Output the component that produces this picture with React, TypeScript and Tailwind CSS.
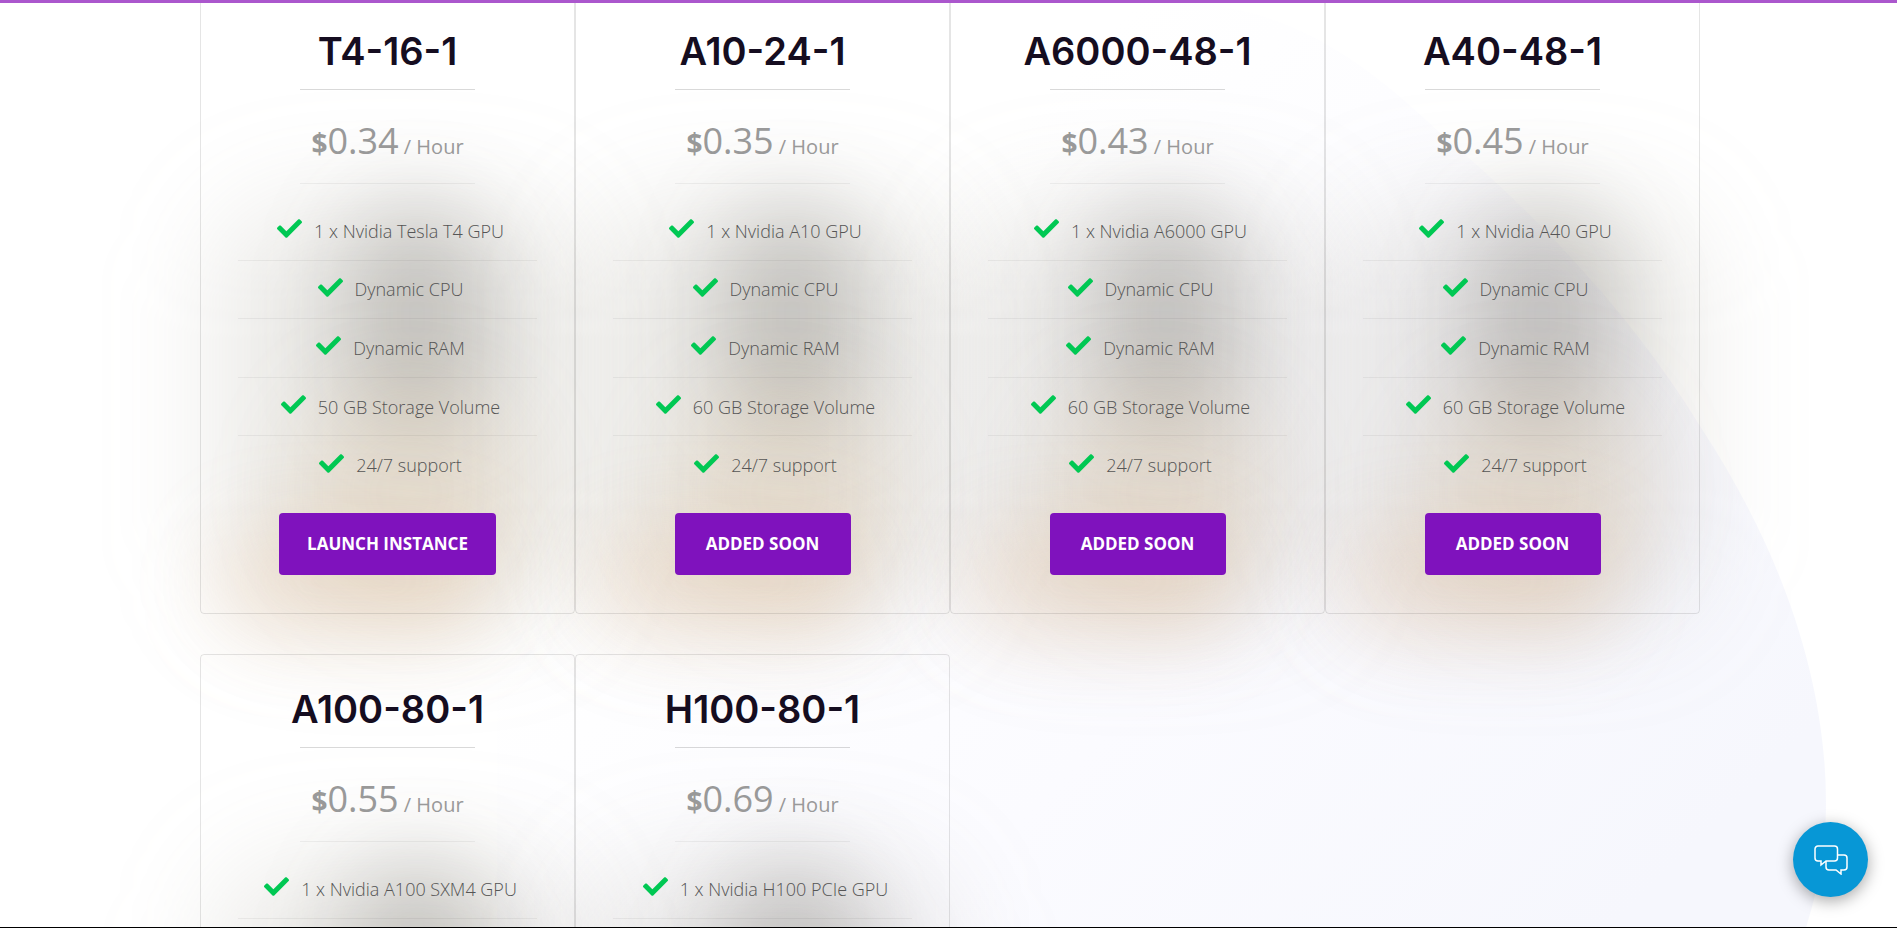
import { FaCheck } from "react-icons/fa";

type Plan = {
  name: string;
  price: string;
  gpu: string;
  storage: string;
  action: string;
};

const plans: Plan[] = [
  { name: "T4-16-1", price: "0.34", gpu: "1 x Nvidia Tesla T4 GPU", storage: "50 GB Storage Volume", action: "Launch Instance" },
  { name: "A10-24-1", price: "0.35", gpu: "1 x Nvidia A10 GPU", storage: "60 GB Storage Volume", action: "Added Soon" },
  { name: "A6000-48-1", price: "0.43", gpu: "1 x Nvidia A6000 GPU", storage: "60 GB Storage Volume", action: "Added Soon" },
  { name: "A40-48-1", price: "0.45", gpu: "1 x Nvidia A40 GPU", storage: "60 GB Storage Volume", action: "Added Soon" },
  { name: "A100-80-1", price: "0.55", gpu: "1 x Nvidia A100 SXM4 GPU", storage: "60 GB Storage Volume", action: "Added Soon" },
  { name: "H100-80-1", price: "0.69", gpu: "1 x Nvidia H100 PCIe GPU", storage: "60 GB Storage Volume", action: "Added Soon" },
];

function BackgroundShape() {
  return (
    <svg
      className="absolute top-0 right-0 h-[928px] w-[1400px]"
      viewBox="0 0 1400 928"
      fill="none"
      aria-hidden="true"
    >
      <defs>
        <linearGradient id="shape" x1="540" y1="100" x2="1240" y2="800" gradientUnits="userSpaceOnUse">
          <stop stopColor="#fff" />
          <stop offset="0.5" stopColor="#fbfbff" />
          <stop offset="1" stopColor="#f6f7fd" />
        </linearGradient>
      </defs>
      <path
        d="M700 0C800 10 870 60 943 130C1050 220 1140 320 1203 423C1280 540 1329 670 1329 800C1329 850 1320 890 1308 928H0V0Z"
        fill="url(#shape)"
      />
    </svg>
  );
}

/* Soft coloured glow behind each card */
function Glow() {
  return (
    <div className="pointer-events-none absolute -inset-x-28 top-16 -bottom-36 -z-10" aria-hidden="true">
      <div className="absolute top-36 left-32 h-104 w-88 rounded-[80px] bg-[#8f8a7c]/18 blur-[56px]" />
      <div className="absolute top-36 left-64 h-56 w-36 rounded-full bg-[#4a4540]/24 blur-[44px]" />
      <div className="absolute top-80 left-52 h-56 w-56 rounded-full bg-[#cfa470]/18 blur-[44px]" />
      <div className="absolute top-116 left-32 h-28 w-68 rounded-full bg-[#d9aa78]/22 blur-[40px]" />
    </div>
  );
}

function PlanCard({ plan }: { plan: Plan }) {
  const features = [plan.gpu, "Dynamic CPU", "Dynamic RAM", plan.storage, "24/7 support"];

  return (
    <article className="relative mb-10 flex h-[618px] flex-col items-center rounded border border-black/10 px-[37px] pt-7 text-center">
      <Glow />
      <h2 className="font-['Inter',sans-serif] text-[38px] leading-[52px] font-semibold text-[#150d20]">
        {plan.name}
      </h2>
      <hr className="mt-3 w-[175px] border-black/15" />
      <p className="mt-[25px] text-[36px] leading-[52px] text-[#999]">
        <span className="text-[28px] font-bold">$</span>
        {plan.price}
        <span className="text-xl"> / Hour</span>
      </p>
      <hr className="mt-[14px] w-[175px] border-black/5" />

      <ul className="mt-[18px] flex h-[292px] w-full flex-col text-lg font-light text-[#555]">
        {features.map((feature) => (
          <li
            key={feature}
            className="flex flex-1 items-center justify-center gap-3 border-b border-black/5 pl-[6px] last:border-0"
          >
            <FaCheck className="mb-1 size-[25px] text-[#00c853]" />
            {feature}
          </li>
        ))}
      </ul>

      <button
        type="button"
        className="mt-[19px] h-[62px] min-w-44 cursor-pointer rounded bg-[#7f12bd] px-7 text-[17px] font-bold text-white uppercase"
      >
        {plan.action}
      </button>
    </article>
  );
}

function ChatButton() {
  return (
    <button
      type="button"
      aria-label="Open chat"
      className="fixed right-[29px] bottom-[31px] flex size-[75px] cursor-pointer items-center justify-center rounded-full bg-[#0797d6] text-white shadow-[0_4px_16px_rgba(0,0,0,0.35)]"
    >
      <svg className="h-[30px] w-[34px]" viewBox="0 0 34 30" fill="none" stroke="currentColor" strokeWidth="1.5" aria-hidden="true">
        <path d="M4 1H20.500A3 3 0 0 1 23.500 4V13A3 3 0 0 1 20.500 16H12L7 20V16H4A3 3 0 0 1 1 13V4A3 3 0 0 1 4 1Z" />
        <path d="M23.500 10H30A3 3 0 0 1 33 13V22A3 3 0 0 1 30 25H27V29L22 25H15A3 3 0 0 1 12 22V16" />
      </svg>
    </button>
  );
}

export default function App() {
  return (
    <main className="relative isolate h-screen overflow-hidden border-t-[3px] border-b border-t-[#ab57cd] border-b-black bg-white font-['Open_Sans',sans-serif]">
      <div className="absolute inset-0 -z-20">
        <BackgroundShape />
      </div>
      <div className="-mt-[7px] pl-[3px]">
        <div className="mx-auto grid max-w-[1500px] grid-cols-4">
          {plans.map((plan) => (
            <PlanCard key={plan.name} plan={plan} />
          ))}
        </div>
      </div>
      <ChatButton />
    </main>
  );
}
